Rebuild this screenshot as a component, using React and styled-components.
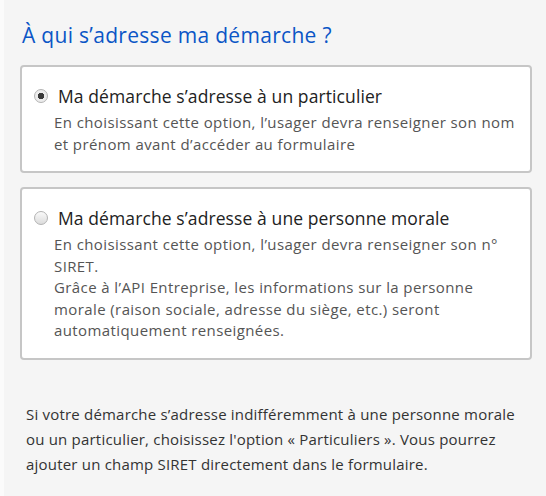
import styled, { createGlobalStyle } from "styled-components";

const GlobalStyle = createGlobalStyle`
  html, body {
    margin: 0;
    padding: 0;
    background: #f5f5f5;
  }
  body {
    font-family: "Open Sans", "Noto Sans", sans-serif;
  }
`;

const options = [
  {
    id: "particulier",
    label: "Ma démarche s’adresse à un particulier",
    checked: true,
    lines: [
      "En choisissant cette option, l’usager devra renseigner son nom et prénom avant d’accéder au formulaire",
    ],
  },
  {
    id: "morale",
    label: "Ma démarche s’adresse à une personne morale",
    checked: false,
    lines: [
      "En choisissant cette option, l’usager devra renseigner son n° SIRET.",
      "Grâce à l’API Entreprise, les informations sur la personne morale (raison sociale, adresse du siège, etc.) seront automatiquement renseignées.",
    ],
  },
];

const App = () => {
  return (
    <>
      <GlobalStyle />
      <Page>
        <Title>À qui s’adresse ma démarche ?</Title>
        <Options>
          {options.map((opt) => (
            <Card key={opt.id}>
              <LabelRow>
                <Radio checked={opt.checked} />
                <Label>{opt.label}</Label>
              </LabelRow>
              <Description>
                {opt.lines.map((line, i) => (
                  <p key={i}>{line}</p>
                ))}
              </Description>
            </Card>
          ))}
        </Options>
        <Note>
          Si votre démarche s’adresse indifféremment à une personne morale ou un
          particulier, choisissez l'option « Particuliers ». Vous pourrez
          ajouter un champ SIRET directement dans le formulaire.
        </Note>
      </Page>
    </>
  );
};

const Page = styled.div`
  min-height: 496px;
  box-sizing: border-box;
  border-left: 4px solid #fbfbfb;
  padding: 22px 14px 0 14px;
`;

const Title = styled.h2`
  margin: 0 0 0 4px;
  font-size: 21px;
  font-weight: 400;
  letter-spacing: 0.3px;
  line-height: 26px;
  color: #0b55c6;
`;

const Options = styled.div`
  display: flex;
  flex-direction: column;
  gap: 14px;
  margin: 17px 0 0 2px;
`;

const Card = styled.div`
  background: #fff;
  border: 2px solid #c6c6c6;
  border-radius: 4px;
  padding: 17px 8px 16px 12px;
`;

const LabelRow = styled.div`
  display: flex;
  align-items: center;
  gap: 10px;
`;

const Radio = styled.span`
  flex: none;
  box-sizing: border-box;
  width: 14px;
  height: 14px;
  border-radius: 50%;
  border: 1px solid #b3b3b3;
  background: ${(p) =>
    p.checked
      ? "radial-gradient(circle, #3a3a3a 0 3px, #ececec 3.5px)"
      : "linear-gradient(#fafafa, #dcdcdc)"};
`;

const Label = styled.span`
  font-size: 17.5px;
  letter-spacing: 0.1px;
  line-height: 24px;
  color: #222;
`;

const Description = styled.div`
  margin: 4px 0 0 20px;
  font-size: 15px;
  letter-spacing: 0.4px;
  line-height: 21.5px;
  color: #555;

  p {
    margin: 0;
  }
`;

const Note = styled.p`
  margin: 42px 10px 0 8px;
  font-size: 15px;
  letter-spacing: 0.2px;
  line-height: 25px;
  color: #333;
`;

export default App;
